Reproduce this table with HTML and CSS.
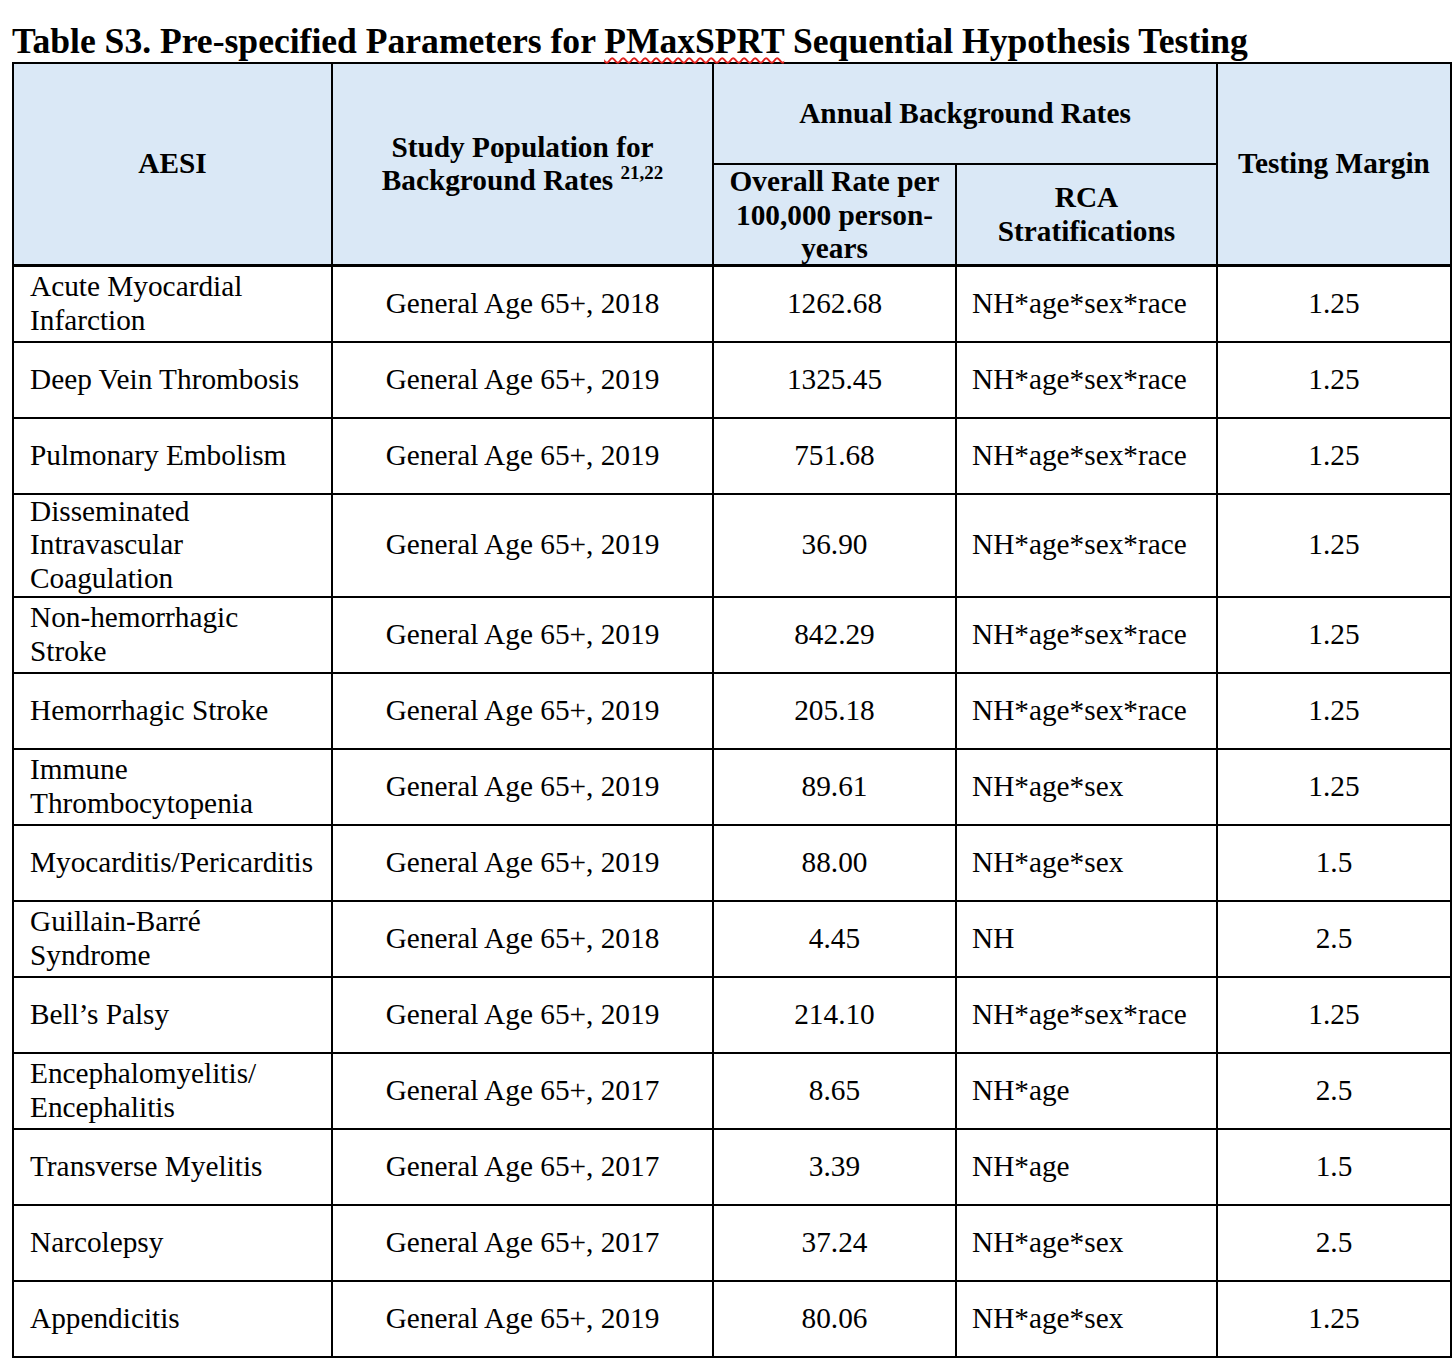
FILE: index.html
```html
<!DOCTYPE html>
<html lang="en">
<head>
<meta charset="utf-8">
<title>Table S3</title>
<link rel="stylesheet" href="styles.css">
</head>
<body>
<div class="page">
  <h1 class="title">Table S3. Pre-specified Parameters for <span class="spell">PMaxSPRT</span> Sequential Hypothesis Testing</h1>
  <table class="grid">
    <colgroup>
      <col class="c1"><col class="c2"><col class="c3"><col class="c4"><col class="c5">
    </colgroup>
    <thead>
      <tr class="h1">
        <th rowspan="2">AESI</th>
        <th rowspan="2">Study Population for<br>Background Rates <sup>21,22</sup></th>
        <th colspan="2">Annual Background Rates</th>
        <th rowspan="2">Testing Margin</th>
      </tr>
      <tr class="h2">
        <th class="top"><div class="clip">Overall Rate per<br>100,000 person-<br>years</div></th>
        <th>RCA<br>Stratifications</th>
      </tr>
    </thead>
    <tbody>
      <tr><td>Acute Myocardial<br>Infarction</td><td>General Age 65+, 2018</td><td>1262.68</td><td>NH*age*sex*race</td><td>1.25</td></tr>
      <tr><td>Deep Vein Thrombosis</td><td>General Age 65+, 2019</td><td>1325.45</td><td>NH*age*sex*race</td><td>1.25</td></tr>
      <tr><td>Pulmonary Embolism</td><td>General Age 65+, 2019</td><td>751.68</td><td>NH*age*sex*race</td><td>1.25</td></tr>
      <tr class="tall"><td>Disseminated<br>Intravascular<br>Coagulation</td><td>General Age 65+, 2019</td><td>36.90</td><td>NH*age*sex*race</td><td>1.25</td></tr>
      <tr><td>Non-hemorrhagic<br>Stroke</td><td>General Age 65+, 2019</td><td>842.29</td><td>NH*age*sex*race</td><td>1.25</td></tr>
      <tr><td>Hemorrhagic Stroke</td><td>General Age 65+, 2019</td><td>205.18</td><td>NH*age*sex*race</td><td>1.25</td></tr>
      <tr><td>Immune<br>Thrombocytopenia</td><td>General Age 65+, 2019</td><td>89.61</td><td>NH*age*sex</td><td>1.25</td></tr>
      <tr><td>Myocarditis/Pericarditis</td><td>General Age 65+, 2019</td><td>88.00</td><td>NH*age*sex</td><td>1.5</td></tr>
      <tr><td>Guillain-Barré<br>Syndrome</td><td>General Age 65+, 2018</td><td>4.45</td><td>NH</td><td>2.5</td></tr>
      <tr><td>Bell’s Palsy</td><td>General Age 65+, 2019</td><td>214.10</td><td>NH*age*sex*race</td><td>1.25</td></tr>
      <tr><td>Encephalomyelitis/<br>Encephalitis</td><td>General Age 65+, 2017</td><td>8.65</td><td>NH*age</td><td>2.5</td></tr>
      <tr><td>Transverse Myelitis</td><td>General Age 65+, 2017</td><td>3.39</td><td>NH*age</td><td>1.5</td></tr>
      <tr><td>Narcolepsy</td><td>General Age 65+, 2017</td><td>37.24</td><td>NH*age*sex</td><td>2.5</td></tr>
      <tr><td>Appendicitis</td><td>General Age 65+, 2019</td><td>80.06</td><td>NH*age*sex</td><td>1.25</td></tr>
    </tbody>
  </table>
</div>
</body>
</html>
```

FILE: styles.css
```css
html, body {
  margin: 0;
  padding: 0;
  background: #ffffff;
}

body {
  font-family: "Liberation Serif", "Times New Roman", serif;
  color: #000000;
}

.page {
  padding: 21px 0 0 12px;
  width: 1440px;
}

.title {
  margin: 0;
  font-size: 35.6px;
  line-height: 41px;
  font-weight: bold;
  white-space: nowrap;
}

.spell {
  text-decoration: underline wavy #e0201c;
  text-decoration-thickness: 1.5px;
  text-underline-offset: 4px;
}

.grid {
  border-collapse: collapse;
  table-layout: fixed;
  width: 1438px;
  font-size: 29.3px;
  line-height: 33.5px;
}

.c1 { width: 319px; }
.c2 { width: 381px; }
.c3 { width: 243px; }
.c4 { width: 261px; }
.c5 { width: 234px; }

.grid th,
.grid td {
  border: 2px solid #000000;
  vertical-align: middle;
  padding: 0 16px;
}

.grid th {
  background: #dae8f6;
  font-weight: bold;
  text-align: center;
  padding: 0 6px;
}

.grid thead tr.h1 { height: 101px; }
.grid thead tr.h2 { height: 101px; }
.grid thead tr.h2 th { border-bottom-width: 3px; }
.grid thead tr.h1 th[rowspan] { border-bottom-width: 3px; }

.grid th.top {
  vertical-align: top;
}

.clip {
  height: 99px;
  overflow: hidden;
}

.grid sup {
  font-size: 19px;
  line-height: 0;
  vertical-align: 11px;
}

.grid tbody tr { height: 76px; }
.grid tbody tr.tall { height: 103px; }

.grid td { text-align: center; }
.grid td:first-child { text-align: left; padding-left: 16px; padding-right: 4px; }
.grid td:nth-child(4) { text-align: left; padding-left: 15px; }
```
